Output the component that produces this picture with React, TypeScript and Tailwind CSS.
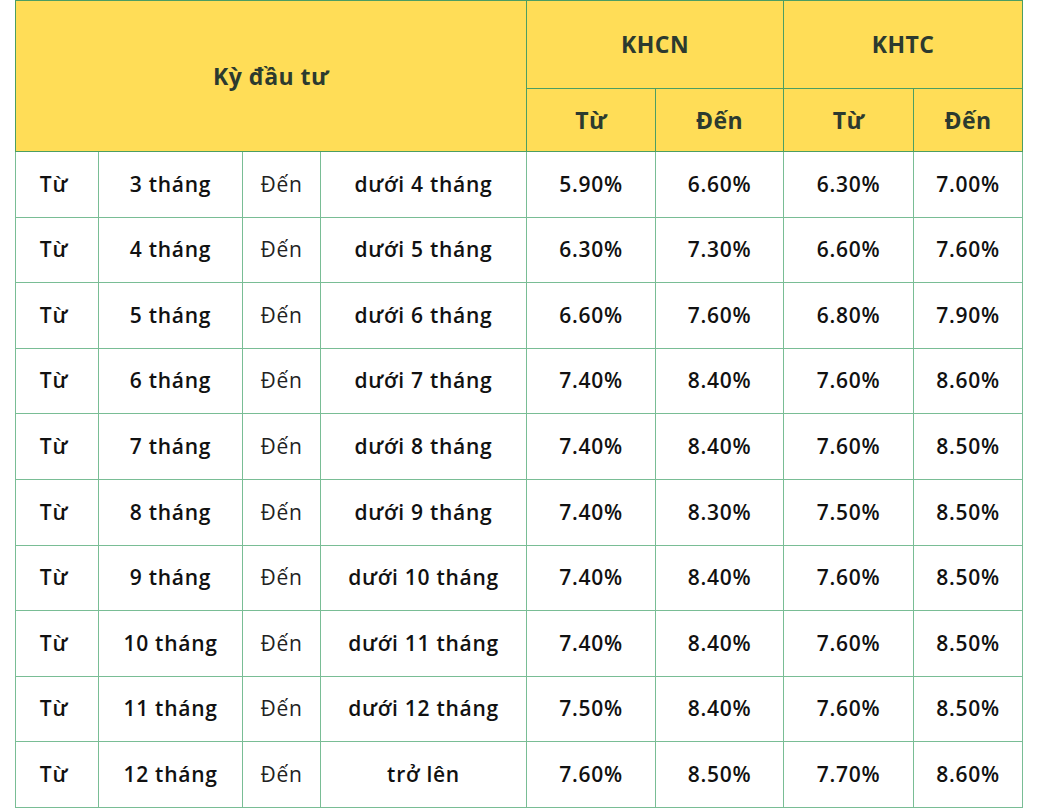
import React from "react";

const rows: [string, string, string, string, string, string][] = [
  ["3 tháng", "dưới 4 tháng", "5.90%", "6.60%", "6.30%", "7.00%"],
  ["4 tháng", "dưới 5 tháng", "6.30%", "7.30%", "6.60%", "7.60%"],
  ["5 tháng", "dưới 6 tháng", "6.60%", "7.60%", "6.80%", "7.90%"],
  ["6 tháng", "dưới 7 tháng", "7.40%", "8.40%", "7.60%", "8.60%"],
  ["7 tháng", "dưới 8 tháng", "7.40%", "8.40%", "7.60%", "8.50%"],
  ["8 tháng", "dưới 9 tháng", "7.40%", "8.30%", "7.50%", "8.50%"],
  ["9 tháng", "dưới 10 tháng", "7.40%", "8.40%", "7.60%", "8.50%"],
  ["10 tháng", "dưới 11 tháng", "7.40%", "8.40%", "7.60%", "8.50%"],
  ["11 tháng", "dưới 12 tháng", "7.50%", "8.40%", "7.60%", "8.50%"],
  ["12 tháng", "trở lên", "7.60%", "8.50%", "7.70%", "8.60%"],
];

const th = "border border-[#4c9e62] bg-[#ffdd57] text-[#2c3a2f] font-bold text-[23px] tracking-[0.02em] text-center align-middle p-0";
const td = "border border-[#79bd95] text-center align-middle p-0 text-[21px] tracking-[0.035em] text-[#111]";

export default function App() {
  return (
    <div className="w-[1048px] h-[808px] bg-white overflow-hidden" style={{ fontFamily: '"Open Sans", "Noto Sans", sans-serif' }}>
      <table className="ml-[15px] table-fixed border-collapse w-[1007px]">
        <colgroup>
          <col className="w-[83px]" />
          <col className="w-[144px]" />
          <col className="w-[78px]" />
          <col className="w-[206px]" />
          <col className="w-[129px]" />
          <col className="w-[128px]" />
          <col className="w-[130px]" />
          <col className="w-[109px]" />
        </colgroup>
        <thead>
          <tr className="h-[88px]">
            <th colSpan={4} rowSpan={2} className={th}>Kỳ đầu tư</th>
            <th colSpan={2} className={th}>KHCN</th>
            <th colSpan={2} className={th}>KHTC</th>
          </tr>
          <tr className="h-[63px]">
            <th className={th}>Từ</th>
            <th className={th}>Đến</th>
            <th className={th}>Từ</th>
            <th className={th}>Đến</th>
          </tr>
        </thead>
        <tbody>
          {rows.map((r, i) => (
            <tr key={i} className="h-[65.6px]">
              <td className={td + " font-semibold pr-[6px]"}>Từ</td>
              <td className={td + " font-semibold"}>{r[0]}</td>
              <td className={td + " font-normal text-[#222]"}>Đến</td>
              <td className={td + " font-semibold"}>{r[1]}</td>
              <td className={td + " font-semibold"}>{r[2]}</td>
              <td className={td + " font-semibold"}>{r[3]}</td>
              <td className={td + " font-semibold"}>{r[4]}</td>
              <td className={td + " font-semibold"}>{r[5]}</td>
            </tr>
          ))}
        </tbody>
      </table>
    </div>
  );
}
